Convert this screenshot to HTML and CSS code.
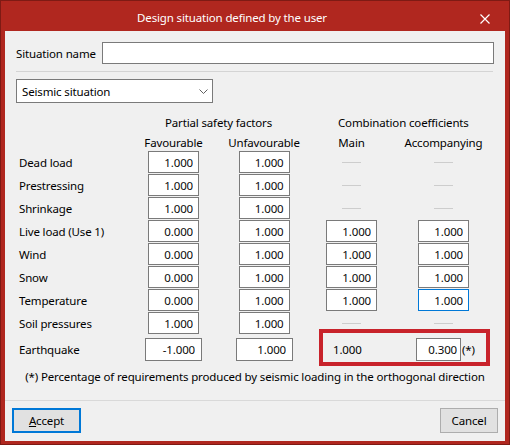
FILE: index.html
```html
<!DOCTYPE html>
<html lang="en">

<head>
    <meta charset="UTF-8">
    <title>Design situation defined by the user</title>
    <link rel="stylesheet" href="styles.css">
</head>

<body>
    <div class="window">
        <div class="titlebar">
            <span class="title">Design situation defined by the user</span>
            <span class="close">
                <svg width="10" height="10" viewBox="0 0 10 10">
                    <path d="M0.5 0.5 L9.5 9.5 M9.5 0.5 L0.5 9.5" stroke="#fff" stroke-width="1.2" fill="none" />
                </svg>
            </span>
        </div>

        <div class="client">
            <div class="content">
                <div class="name-row">
                    <label class="name-label" for="situation-name">Situation name</label>
                    <input type="text" id="situation-name" class="name-input">
                </div>

                <div class="sep"></div>

                <div class="select">
                    <span>Seismic situation</span>
                    <svg width="9" height="5" viewBox="0 0 9 5">
                        <path d="M0.5 0.5 L4.5 4.5 L8.5 0.5" stroke="#606060" stroke-width="1" fill="none" />
                    </svg>
                </div>

                <div class="factors">
                    <div class="row head1">
                        <div class="label"></div>
                        <div class="group-partial">Partial safety factors</div>
                        <div class="group-combo">Combination coefficients</div>
                    </div>
                    <div class="row head2">
                        <div class="label"></div>
                        <div class="cell fav">Favourable</div>
                        <div class="cell unfav">Unfavourable</div>
                        <div class="cell main">Main</div>
                        <div class="cell acc">Accompanying</div>
                    </div>

                    <div class="row">
                        <div class="label">Dead load</div>
                        <div class="cell fav"><input class="num" value="1.000"></div>
                        <div class="cell unfav"><input class="num" value="1.000"></div>
                        <div class="cell main"><span class="dash"></span></div>
                        <div class="cell acc"><span class="dash"></span></div>
                    </div>
                    <div class="row">
                        <div class="label">Prestressing</div>
                        <div class="cell fav"><input class="num" value="1.000"></div>
                        <div class="cell unfav"><input class="num" value="1.000"></div>
                        <div class="cell main"><span class="dash"></span></div>
                        <div class="cell acc"><span class="dash"></span></div>
                    </div>
                    <div class="row">
                        <div class="label">Shrinkage</div>
                        <div class="cell fav"><input class="num" value="1.000"></div>
                        <div class="cell unfav"><input class="num" value="1.000"></div>
                        <div class="cell main"><span class="dash"></span></div>
                        <div class="cell acc"><span class="dash"></span></div>
                    </div>
                    <div class="row">
                        <div class="label">Live load (Use 1)</div>
                        <div class="cell fav"><input class="num" value="0.000"></div>
                        <div class="cell unfav"><input class="num" value="1.000"></div>
                        <div class="cell main"><input class="num" value="1.000"></div>
                        <div class="cell acc"><input class="num" value="1.000"></div>
                    </div>
                    <div class="row">
                        <div class="label">Wind</div>
                        <div class="cell fav"><input class="num" value="0.000"></div>
                        <div class="cell unfav"><input class="num" value="1.000"></div>
                        <div class="cell main"><input class="num" value="1.000"></div>
                        <div class="cell acc"><input class="num" value="1.000"></div>
                    </div>
                    <div class="row">
                        <div class="label">Snow</div>
                        <div class="cell fav"><input class="num" value="0.000"></div>
                        <div class="cell unfav"><input class="num" value="1.000"></div>
                        <div class="cell main"><input class="num" value="1.000"></div>
                        <div class="cell acc"><input class="num" value="1.000"></div>
                    </div>
                    <div class="row">
                        <div class="label">Temperature</div>
                        <div class="cell fav"><input class="num" value="0.000"></div>
                        <div class="cell unfav"><input class="num" value="1.000"></div>
                        <div class="cell main"><input class="num" value="1.000"></div>
                        <div class="cell acc"><input class="num hover" value="1.000"></div>
                    </div>
                    <div class="row">
                        <div class="label">Soil pressures</div>
                        <div class="cell fav"><input class="num" value="1.000"></div>
                        <div class="cell unfav"><input class="num" value="1.000"></div>
                        <div class="cell main"><span class="dash"></span></div>
                        <div class="cell acc"><span class="dash"></span></div>
                    </div>

                    <div class="row quake">
                        <div class="label">Earthquake</div>
                        <div class="cell fav"><input class="num wide" value="-1.000"></div>
                        <div class="cell unfav"><input class="num wide" value="1.000"></div>
                        <div class="cell main"><span class="plain">1.000</span></div>
                        <div class="cell acc">
                            <input class="num short" value="0.300">
                            <span class="star">(*)</span>
                        </div>
                        <div class="highlight"></div>
                    </div>
                </div>

                <p class="note">(*) Percentage of requirements produced by seismic loading in the orthogonal direction</p>
            </div>

            <div class="footer">
                <button class="btn default"><u>A</u>ccept</button>
                <button class="btn">Cancel</button>
            </div>
        </div>
    </div>
</body>

</html>
```

FILE: styles.css
```css
* {
    box-sizing: border-box;
}

body {
    margin: 0;
    font-family: "Noto Sans", "Liberation Sans", sans-serif;
    font-size: 11.5px;
    letter-spacing: -0.15px;
    color: #000;
}

.window {
    width: 510px;
    height: 445px;
    display: flex;
    flex-direction: column;
    background-color: #b0271f;
    border: 1px solid #7e1a14;
    padding: 0 4px 3px 4px;
}

.titlebar {
    height: 30px;
    display: flex;
    align-items: center;
    color: #fff;
    margin: 0 -4px;
}

.title {
    flex: 1;
    text-align: center;
    padding-top: 2px;
}

.close {
    width: 46px;
    display: flex;
    justify-content: center;
    padding-top: 5px;
    padding-right: 2px;
}

.client {
    flex: 1;
    display: flex;
    flex-direction: column;
    background-color: #f0f0f0;
}

.content {
    flex: 1;
    padding: 11px 11px 0 11px;
}

.name-row {
    display: flex;
    align-items: center;
    height: 22px;
}

.name-label {
    width: 86px;
    white-space: nowrap;
}

.name-input {
    flex: 1;
    height: 22px;
    border: 1px solid #7a7a7a;
    background: #fff;
    outline: none;
}

.sep {
    margin: 7px 1px 0 0;
    height: 1px;
    background-color: #d4d4d4;
}

.select {
    margin-top: 7px;
    width: 197px;
    height: 24px;
    border: 1px solid #7a7a7a;
    background-color: #fff;
    display: flex;
    align-items: center;
    justify-content: space-between;
    padding: 0 4px 0 5px;
}

.factors {
    margin-top: 11px;
}

.row {
    display: flex;
    height: 23px;
    position: relative;
}

.row .label {
    width: 129px;
    padding-left: 3px;
    height: 22px;
    display: flex;
    align-items: center;
    white-space: nowrap;
}

.cell {
    display: flex;
    justify-content: center;
    align-items: center;
    height: 22px;
    white-space: nowrap;
}

.cell.fav {
    width: 57px;
}

.cell.unfav {
    width: 56px;
    margin-left: 34px;
}

.cell.main {
    width: 65px;
    margin-left: 27px;
}

.cell.acc {
    width: 79px;
    margin-left: 20px;
}

.head1 {
    height: 17px;
    align-items: center;
}

.group-partial {
    width: 147px;
    display: flex;
    justify-content: center;
    white-space: nowrap;
}

.group-combo {
    margin-left: 46px;
    white-space: nowrap;
}

.head2 {
    height: 20px;
    padding-top: 3px;
}

.head2 .cell {
    height: 16px;
}

.num {
    width: 51px;
    height: 22px;
    border: 1px solid #7a7a7a;
    background-color: #fff;
    text-align: right;
    padding: 0 5px 0 0;
    font-family: inherit;
    font-size: 11.5px;
    letter-spacing: -0.15px;
    color: #0a0a0a;
    outline: none;
}

.num.hover {
    border-color: #0078d7;
}

.dash {
    width: 19px;
    height: 1px;
    background-color: #cdcdcd;
}

.quake {
    margin-top: 3px;
}

.quake .cell,
.quake .label {
    height: 23px;
}

.num.wide {
    width: 57px;
    height: 23px;
    padding-right: 6px;
}

.quake .cell.unfav {
    justify-content: flex-start;
}

.quake .cell.main {
    justify-content: flex-start;
    padding-left: 14px;
}

.quake .cell.acc {
    justify-content: flex-start;
    padding-left: 12px;
}

.num.short {
    width: 45px;
    height: 23px;
    padding-right: 3px;
}

.star {
    margin-left: 1px;
}

.highlight {
    position: absolute;
    left: 303px;
    top: -9px;
    width: 171px;
    height: 37px;
    border: 4px solid #c8232b;
    pointer-events: none;
}

.note {
    margin: 8px 0 0 0;
    text-align: center;
    white-space: nowrap;
    line-height: 16px;
}

.footer {
    height: 41px;
    border-top: 1px solid #d9d9d9;
    display: flex;
    justify-content: space-between;
    align-items: flex-start;
    padding: 7px 7px 0 7px;
}

.btn {
    height: 25px;
    font-family: inherit;
    font-size: 11.5px;
    letter-spacing: -0.15px;
    color: #000;
    background-color: #e1e1e1;
    border: 1px solid #adadad;
    padding: 0;
}

.btn.default {
    width: 69px;
    border: 2px solid #0078d7;
}

.btn:last-child {
    width: 58px;
}
```
